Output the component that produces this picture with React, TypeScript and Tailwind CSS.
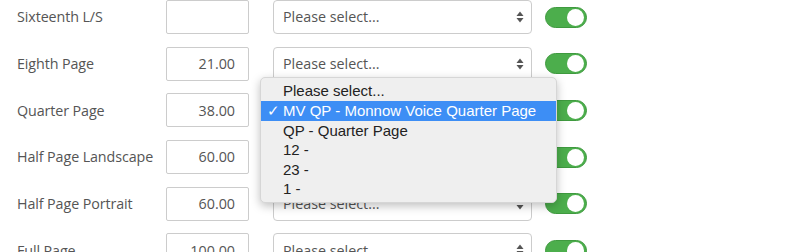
import React from 'react'

interface Row {
  label: string
  price: string
}

const rows: Row[] = [
  { label: 'Sixteenth L/S', price: '' },
  { label: 'Eighth Page', price: '21.00' },
  { label: 'Quarter Page', price: '38.00' },
  { label: 'Half Page Landscape', price: '60.00' },
  { label: 'Half Page Portrait', price: '60.00' },
  { label: 'Full Page', price: '100.00' },
]

const options = [
  'Please select...',
  'MV QP - Monnow Voice Quarter Page',
  'QP - Quarter Page',
  '12 -',
  '23 -',
  '1 -',
]

function UpDown() {
  return (
    <svg width="8" height="12" viewBox="0 0 8 12" className="text-[#555]">
      <path d="M4 0.5 L7.5 5 H0.5 Z" fill="currentColor" />
      <path d="M4 11.5 L7.5 7 H0.5 Z" fill="currentColor" />
    </svg>
  )
}

function Toggle() {
  return (
    <div className="w-[42px] h-[21px] rounded-full bg-[#4cae4c] border border-[#3f9a3f] flex items-center justify-end pr-[2px]">
      <div className="w-[17px] h-[17px] rounded-full bg-white" />
    </div>
  )
}

export default function App() {
  return (
    <div className="relative w-[800px] h-[252px] overflow-hidden bg-white" style={{ fontFamily: '"Open Sans", sans-serif' }}>
      <div className="flex flex-col gap-[12.7px]">
        {rows.map(row => (
          <div key={row.label} className="flex items-center h-[34px]">
            <div className="w-[166px] pl-[17px] text-[14.3px] text-[#555] tracking-[-0.1px]">{row.label}</div>
            <div className="w-[83px] h-[34px] border border-[#ccc] rounded-[2px] flex items-center justify-end pr-[13px] text-[14.3px] text-[#555]">
              {row.price}
            </div>
            <div className="ml-[24px] w-[259px] h-[34px] border border-[#ccc] rounded-[4px] flex items-center justify-between pl-[9px] pr-[7px] text-[14.3px] text-[#555]">
              <span>Please select...</span>
              <UpDown />
            </div>
            <div className="ml-[13px]">
              <Toggle />
            </div>
          </div>
        ))}
      </div>

      {/* native select popup */}
      <div
        className="absolute left-[260px] top-[77px] w-[297px] h-[126px] bg-[#efefef] rounded-[5px] border border-[#d6d6d6] shadow-[0_3px_10px_rgba(0,0,0,0.25)] pt-[3px] text-[15px] text-[#222]"
        style={{ fontFamily: '"Liberation Sans", Arial, sans-serif' }}
      >
        {options.map((opt, i) => (
          <div
            key={opt}
            className={i === 1 ? 'relative h-[20px] leading-[20px] pl-[22px] bg-[#3d8ef5] text-white' : 'h-[19.6px] leading-[19.6px] pl-[22px]'}
          >
            {i === 1 && <span className="absolute left-[6px]">✓</span>}
            {opt}
          </div>
        ))}
      </div>
    </div>
  )
}
